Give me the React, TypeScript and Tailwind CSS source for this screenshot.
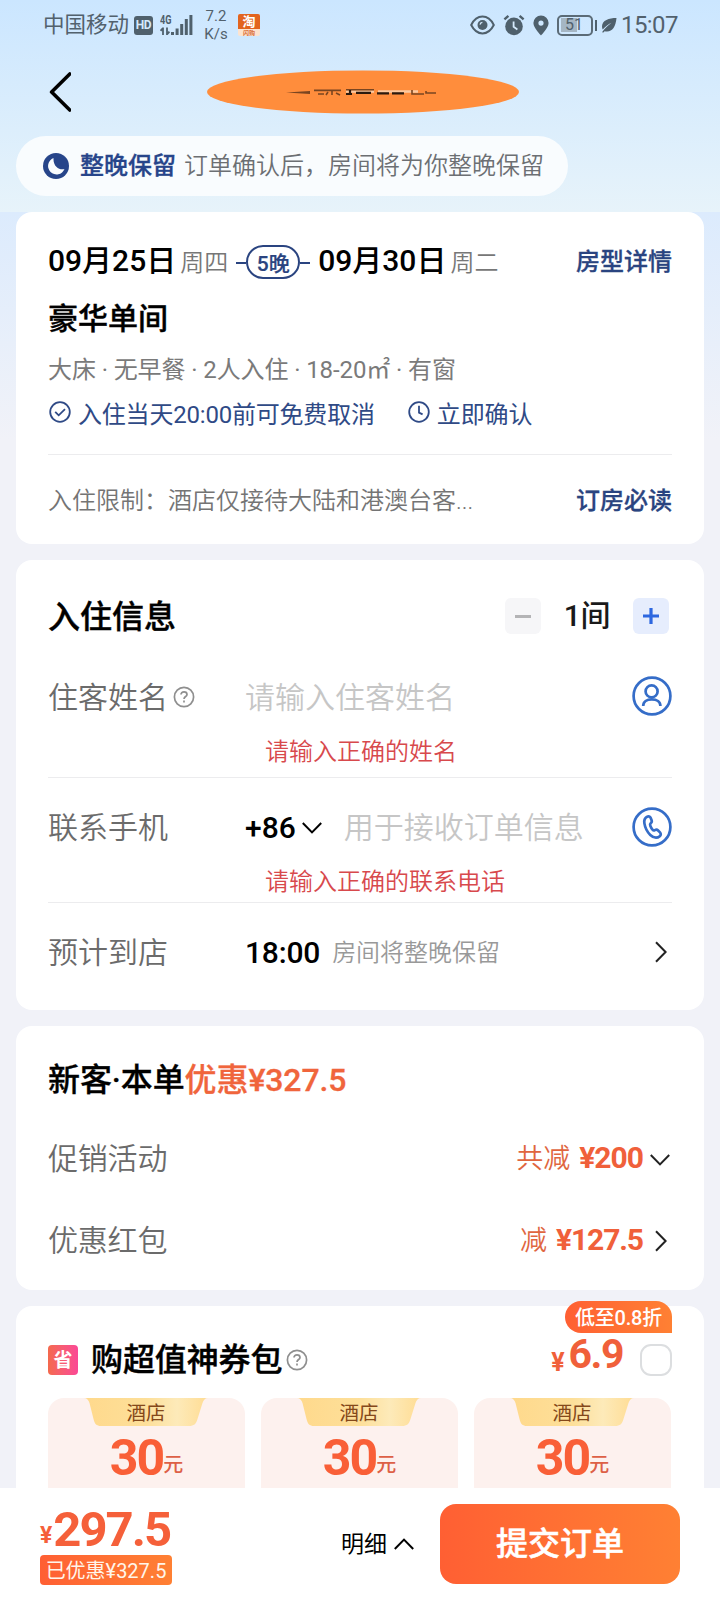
import type { ReactNode } from 'react'

const coupons = [
  { id: 1, type: '酒店', amount: 30 },
  { id: 2, type: '酒店', amount: 30 },
  { id: 3, type: '酒店', amount: 30 },
]

function Chevron({ dir, className = '' }: { dir: 'down' | 'up' | 'right'; className?: string }) {
  if (dir === 'right') {
    return (
      <svg width="12" height="22" viewBox="0 0 12 22" fill="none" className={className}>
        <path d="M1 1.2 10.6 11 1 20.8" stroke="currentColor" strokeWidth="2" />
      </svg>
    )
  }
  return (
    <svg width="20" height="12" viewBox="0 0 20 12" fill="none" className={className}>
      <path d={dir === 'down' ? 'M.8 1 10 10.4 19.2 1' : 'M.8 11 10 1.6 19.2 11'} stroke="currentColor" strokeWidth="2" />
    </svg>
  )
}

function HelpIcon() {
  return (
    <svg width="22" height="22" viewBox="0 0 22 22" fill="none" stroke="#8f8f8f" strokeWidth="1.7">
      <circle cx="11" cy="11" r="9.6" />
      <path d="M8 8.6c0-1.7 1.2-2.7 3-2.7s3 1 3 2.5c0 2.1-3 2.2-3 4.6" />
      <path d="M11 14.6v2" />
    </svg>
  )
}

function StatusBar() {
  return (
    <div className="flex h-12 items-center pl-[43px] pr-[41px] pt-[2px] text-[#52616d]">
      <span className="text-[21.5px] leading-none">中国移动</span>
      <span className="ml-[5px] flex h-[19px] w-[19px] items-center justify-center rounded-[3px] bg-[#4f606c] text-[12px] font-bold tracking-[-0.3px] text-[#d5e9fb]">
        HD
      </span>
      <svg width="34" height="24" viewBox="0 0 34 24" className="ml-[7px]" fill="#4f606c">
        <text x="0" y="11" fontSize="12.5" fontWeight="700" fontFamily="Roboto, sans-serif" textLength="11.5" lengthAdjust="spacingAndGlyphs">4G</text>
        <path d="M3 14.5v7.5M.6 17.8l2.4-2.8M7 14.4v7.5M9.4 18.6l-2.4 2.8" stroke="#4f606c" strokeWidth="1.8" fill="none" />
        <rect x="11" y="19" width="3" height="3" />
        <rect x="15.6" y="15.5" width="3" height="6.5" />
        <rect x="20.2" y="11" width="3" height="11" />
        <rect x="24.8" y="6" width="3" height="16" />
        <rect x="29.4" y="2" width="3" height="20" />
      </svg>
      <div className="ml-[10px] flex w-6 flex-col text-center text-[15px] leading-[18px]">
        <span>7.2</span>
        <span>K/s</span>
      </div>
      <div className="ml-[10px] flex h-[22px] w-[22px] flex-col overflow-hidden rounded-[2px] bg-[#fde3cf]">
        <span className="flex h-[15px] items-center justify-center bg-[#e2641f] text-[13px] font-bold leading-none text-white">淘</span>
        <span className="text-center text-[6px] font-bold leading-[7px] text-[#d9703a]">闪购</span>
      </div>

      <div className="ml-auto flex items-center">
        <svg width="25" height="20" viewBox="0 0 25 20" fill="none" stroke="#4f606c" strokeWidth="2">
          <path d="M1.2 10C4 4.4 7.8 1.6 12.5 1.6S21 4.4 23.8 10C21 15.6 17.2 18.4 12.5 18.4S4 15.6 1.2 10Z" />
          <circle cx="12.5" cy="10" r="5" fill="#4f606c" stroke="none" />
          <path d="M10 9.6a2.6 2.6 0 0 1 2.4-2.3" stroke="#d5e9fb" strokeWidth="1.2" />
        </svg>
        <svg width="22" height="22" viewBox="0 0 22 22" fill="#4f606c" className="ml-2">
          <circle cx="11" cy="12.4" r="8.8" />
          <path d="M1.4 5.4 5.4 1.8M20.6 5.4l-4-3.6" stroke="#4f606c" strokeWidth="2.4" />
          <path d="M10.6 7.4v5.4l3.8 2.6" stroke="#d5e9fb" strokeWidth="1.8" fill="none" />
        </svg>
        <svg width="16" height="21" viewBox="0 0 16 21" className="ml-2">
          <path fillRule="evenodd" d="M8 .5a7.6 7.6 0 0 0-7.6 7.6C.4 13 8 20.5 8 20.5s7.6-7.5 7.6-12.4A7.6 7.6 0 0 0 8 .5Zm0 5a2.6 2.6 0 1 1 0 5.2 2.6 2.6 0 0 1 0-5.2Z" fill="#4f606c" />
        </svg>
        <div className="ml-2 flex h-[21px] w-9 items-center rounded-[5px] border-2 border-[#5b6b77] p-[2px]">
          <div className="flex h-[14px] w-4 items-center whitespace-nowrap bg-[#a5b6c4] pl-[4px] text-[16px] leading-none">
            51
          </div>
        </div>
        <span className="ml-[2px] h-[11px] w-[2px] bg-[#4f606c]" />
        <svg width="16" height="16" viewBox="0 0 16 16" className="ml-[4px]" fill="#4f606c">
          <path d="M15.5 1C8 1 1 3.2 1 9.6c0 1.3.3 2.2.8 3C4.2 9.8 7 7.4 10.6 5.8 7.2 8.200 3.6 11.6 1 15.2l1.4.4 1.2-1.4C10.5 16 14.6 10.6 15.5 1Z" />
        </svg>
        <span className="ml-[4px] w-[58px] text-[24px] leading-none tracking-[-0.6px]">15:07</span>
      </div>
    </div>
  )
}

function NavBar() {
  return (
    <div className="flex h-[88px] items-center pl-[49px]">
      <svg width="22" height="40" viewBox="0 0 22 40" fill="none" stroke="#000" strokeWidth="3.6" strokeLinecap="round" strokeLinejoin="round">
        <path d="M20.8 2 2.6 20l18.2 18" />
      </svg>
      {/* hotel name, scribbled over */}
      <svg width="314" height="44" viewBox="0 0 314 44" className="ml-[135px]">
        <ellipse cx="157" cy="22" rx="156" ry="21.6" fill="#ff8d3c" />
        <path d="M140 21.5h28M172 21.5h40" stroke="#fbc9a0" strokeWidth="2.6" />
        <path d="M80 22.5 104 21v3ZM108 19.5h27v1.8h-27ZM140 19h28v1.6h-28Z" fill="#7a4520" />
        <path d="M112 24h6M122 22l-2 3M126 21v4M130 23l4 2M206 20v4h12M220 21v2h10" stroke="#7a4520" strokeWidth="1.6" fill="none" />
        <path d="M140 24h6M144 20v5M150 22.8h15M171 23.3h12M186 23.3h12" stroke="#2b1a0e" strokeWidth="2.2" />
      </svg>
    </div>
  )
}

function Card({ className = '', children }: { className?: string; children: ReactNode }) {
  return <section className={`relative mx-4 shrink-0 rounded-2xl bg-white px-8 ${className}`}>{children}</section>
}

function RoomCard() {
  return (
    <Card className="h-[332px] pt-6">
      <div className="flex h-12 items-center">
        <span className="text-[30px] font-medium text-black">09月25日</span>
        <span className="ml-[4px] mt-[6px] text-2xl font-[350] text-[#777]">周四</span>
        <span className="ml-2 mt-[5px] h-[2px] w-[10px] bg-[#2a4480]" />
        <span className="mt-[4px] flex h-[34px] w-[54px] items-center justify-center rounded-full border-2 border-[#2a4480] pt-[5px] text-[21px] font-medium text-[#2a4480] [-webkit-text-stroke:0.2px]">
          5晚
        </span>
        <span className="mt-[5px] h-[2px] w-[10px] bg-[#2a4480]" />
        <span className="ml-[8px] text-[30px] font-medium text-black">09月30日</span>
        <span className="ml-[4px] mt-[6px] text-2xl font-[350] text-[#777]">周二</span>
        <a className="ml-auto mt-[3px] text-2xl font-medium text-[#2a4480] [-webkit-text-stroke:0.3px]">房型详情</a>
      </div>
      <h2 className="flex h-[68px] items-center text-[30px] font-medium text-black [-webkit-text-stroke:0.4px]">豪华单间</h2>
      <p className="mt-[2px] flex h-8 items-center text-2xl tracking-[-0.1px] text-[#7a7a7a]">大床 · 无早餐 · 2人入住 · 18-20㎡ · 有窗</p>
      <div className="flex h-14 items-center text-2xl text-[#2f4a86]">
        <svg width="22" height="22" viewBox="0 0 22 22" fill="none" stroke="currentColor" strokeWidth="1.8" className="mb-1 ml-[1px]">
          <circle cx="11" cy="11" r="9.8" />
          <path d="m6.2 10.8 3.5 3.5 6.3-6.2" />
        </svg>
        <span className="ml-[7px] mt-[2px] tracking-[-0.2px]">入住当天20:00前可免费取消</span>
        <svg width="22" height="22" viewBox="0 0 22 22" fill="none" stroke="currentColor" strokeWidth="1.8" className="mb-1 ml-[33px]">
          <circle cx="11" cy="11" r="9.8" />
          <path d="M11 4.800v6.800l3.600 1.800" />
        </svg>
        <span className="ml-[7px] mt-[2px] tracking-[-0.1px]">立即确认</span>
      </div>
      <div className="mt-3 flex h-[90px] items-center justify-between border-t border-[#ececee] pt-[3px] text-2xl">
        <span className="font-[350] text-[#747474]">入住限制：酒店仅接待大陆和港澳台客...</span>
        <a className="font-medium text-[#2a4480] [-webkit-text-stroke:0.3px]">订房必读</a>
      </div>
    </Card>
  )
}

function GuestCard() {
  return (
    <Card className="mt-4 h-[450px] pt-6">
      <div className="flex h-16 items-center pr-[3px]">
        <h2 className="mt-[2px] text-[32px] font-medium text-black [-webkit-text-stroke:0.4px]">入住信息</h2>
        <button className="ml-auto flex h-9 w-9 items-center justify-center rounded-md bg-[#f6f6f8]">
          <span className="h-[3px] w-4 bg-[#b4b4b6]" />
        </button>
        <span className="mb-[2px] w-[92px] text-center text-[30px] font-medium tracking-[-0.3px] text-[#1a1a1a]">1间</span>
        <button className="flex h-9 w-9 items-center justify-center rounded-md bg-[#e6edfd]">
          <svg width="16" height="16" viewBox="0 0 16 16" stroke="#2d67e0" strokeWidth="3.2">
            <path d="M8 0v16M0 8h16" />
          </svg>
        </button>
      </div>

      <div className="h-[129px] pt-3">
        <div className="flex h-[74px] items-center text-[30px] font-[350]">
          <div className="flex w-[197px] items-center gap-[5px] text-[#6b6b6b]">
            住客姓名
            <HelpIcon />
          </div>
          <span className="text-[#c6c6c6]">请输入住客姓名</span>
          <svg width="40" height="40" viewBox="0 0 40 40" fill="none" stroke="#356dc8" strokeWidth="2.7" className="mb-[2px] ml-auto">
            <circle cx="20" cy="20" r="18.4" />
            <circle cx="19.6" cy="15.4" r="6" />
            <path d="M11.2 30c0-4.2 3.6-6.6 8.6-6.6s8.6 2.4 8.6 6.6" />
          </svg>
        </div>
        <p className="flex h-9 items-center pl-[217px] text-2xl font-[350] text-[#d8494c]">请输入正确的姓名</p>
      </div>

      <div className="h-[125px] border-t border-[#ececee] pt-3">
        <div className="flex h-[74px] items-center text-[30px] font-[350]">
          <span className="w-[197px] text-[#6b6b6b]">联系手机</span>
          <span className="font-medium text-black">+86</span>
          <Chevron dir="down" className="ml-[6px] mt-[2px] text-black" />
          <span className="ml-[22px] text-[#c6c6c6]">用于接收订单信息</span>
          <svg width="40" height="40" viewBox="0 0 40 40" fill="none" stroke="#356dc8" strokeWidth="2.7" strokeLinejoin="round" className="ml-auto">
            <circle cx="20" cy="20" r="18.4" />
            <path d="M15 9.8c1.5-.9 3.1-.3 3.7 1.200l.9 2.300c.5 1.300 0 2.300-.9 3-.8.700-.8 1.500-.4 2.500.5 1.300 1.300 2.900 2.200 3.900.7.800 1.500.9 2.400.4 1.200-.6 2.300-.5 3.200.4l1.900 1.900c1.100 1.200 1 2.800-.2 3.800-2.700 2.200-6.400 1.600-9.500-1.300-3.200-3-5.200-7.200-5.900-11.500-.5-3 .3-5.300 2.600-6.600Z" />
          </svg>
        </div>
        <p className="flex h-9 items-center pl-[217px] text-2xl font-[350] text-[#d8494c]">请输入正确的联系电话</p>
      </div>

      <div className="flex h-[100px] items-center border-t border-[#ececee] text-[30px] font-[350]">
        <span className="w-[197px] text-[#6b6b6b]">预计到店</span>
        <span className="font-medium tracking-[-0.2px] text-black">18:00</span>
        <span className="ml-[12px] text-2xl text-[#999]">房间将整晚保留</span>
        <Chevron dir="right" className="mb-[2px] ml-auto mr-[5px] text-[#222]" />
      </div>
    </Card>
  )
}

function DiscountCard() {
  return (
    <Card className="mt-4 h-[264px] pt-[22px]">
      <h2 className="mb-[5px] flex h-16 items-center text-[32px] font-medium tracking-[-0.1px] text-black [-webkit-text-stroke:0.3px]">
        新客·本单<span className="text-[#f0653c]">优惠¥327.5</span>
      </h2>
      <div className="flex h-[82px] items-center">
        <span className="text-[30px] font-[350] tracking-[-0.2px] text-[#6b6b6b]">促销活动</span>
        <span className="ml-auto mt-[2px] text-[27px] font-[350] text-[#e0663f]">共减</span>
        <span className="mb-[2px] ml-[9px] text-[30px] font-bold tracking-[-1px] text-[#f0603a]">¥200</span>
        <Chevron dir="down" className="ml-[7px] mr-[2px] mt-[3px] text-[#222]" />
      </div>
      <div className="flex h-[82px] items-center">
        <span className="text-[30px] font-[350] tracking-[-0.2px] text-[#6b6b6b]">优惠红包</span>
        <span className="ml-auto mt-[2px] text-[27px] font-[350] text-[#e0663f]">减</span>
        <span className="mb-[2px] ml-[9px] text-[30px] font-bold tracking-[-1.1px] text-[#f0603a]">¥127.5</span>
        <Chevron dir="right" className="ml-[12px] mr-[5px] mt-[2px] text-[#222]" />
      </div>
    </Card>
  )
}

function CouponCard() {
  return (
    <Card className="mt-4 h-[300px] pt-[22px]">
      <span className="absolute right-8 top-[-5px] flex h-8 w-[107px] items-center justify-center rounded-[16px] rounded-br-none bg-linear-to-r from-[#ff5f33] to-[#ff8033] pt-[2px] text-[20px] font-medium tracking-[-0.2px] text-white">
        低至0.8折
      </span>
      <div className="flex h-16 items-center">
        <span className="flex h-[30px] w-[30px] items-center justify-center rounded-[4px] bg-linear-to-r from-[#f4694c] to-[#fb4796] text-[19px] font-bold leading-none text-white">
          省
        </span>
        <h2 className="ml-[13px] mr-[4px] text-[32px] font-medium tracking-[-0.1px] text-black [-webkit-text-stroke:0.4px]">购超值神券包</h2>
        <HelpIcon />
        <div className="mb-[11px] ml-auto flex items-end font-bold leading-none text-[#f0603a]">
          <span className="mr-[4px] text-[25px]">¥</span>
          <span className="text-[41px] tracking-[-1.5px]">6.9</span>
        </div>
        <span className="ml-[17px] h-8 w-8 rounded-[11px] border-2 border-[#dcdee0]" />
      </div>
      <div className="mr-[1px] mt-[6px] grid grid-cols-3 gap-4">
        {coupons.map((coupon) => (
          <div key={coupon.id} className="relative flex h-40 flex-col items-center rounded-2xl bg-[#fdf1ee]">
            <svg width="124" height="28" viewBox="0 0 124 28" className="absolute left-[36px] top-0">
              <defs>
                <linearGradient id={`tab-${coupon.id}`}>
                  <stop offset="0" stopColor="#ffd98c" />
                  <stop offset="0.5" stopColor="#fddf99" />
                  <stop offset="0.75" stopColor="#fdeab9" />
                  <stop offset="1" stopColor="#ffdc93" />
                </linearGradient>
              </defs>
              <path d="M0 0c3 0 4.5 2 5.5 5l4 16c1.3 5 3 7 7.5 7h88c5 0 7-2 8.5-7l5-16c1-3 2.5-5 5.5-5Z" fill={`url(#tab-${coupon.id})`} />
            </svg>
            <span className="relative mr-[1px] flex h-[31px] items-center text-[19.5px] text-[#84481a]">{coupon.type}</span>
            <div className="mt-[4px] flex items-baseline leading-none text-[#f95f37]">
              <span className="text-[50px] font-bold tracking-[-2px]">{coupon.amount}</span>
              <span className="relative top-[-3px] text-[20px] font-medium text-[#dd6046]">元</span>
            </div>
          </div>
        ))}
      </div>
    </Card>
  )
}

function SubmitBar() {
  return (
    <footer className="flex h-28 shrink-0 items-center bg-white pl-10 pr-10">
      <div className="flex flex-col items-start">
        <div className="flex h-[49px] items-baseline font-bold leading-none text-[#f5603a]">
          <span className="relative top-[-2px] mr-[1px] text-[23px]">¥</span>
          <span className="relative top-[1px] text-[49px] tracking-[-2px]">297.5</span>
        </div>
        <span className="mt-[2px] flex h-[30px] w-[132px] items-center justify-center rounded-[4px] bg-linear-to-r from-[#ff5f33] to-[#ff8033] pt-[2px] text-[20px] text-[#fff5ea]">
          已优惠¥327.5
        </span>
      </div>
      <span className="ml-auto mt-[3px] text-[23px] text-black">明细</span>
      <Chevron dir="up" className="ml-[7px] mr-[26px] text-black" />
      <button className="flex h-20 w-60 items-center justify-center rounded-2xl bg-linear-to-r from-[#ff5f33] to-[#ff8033] text-[32px] font-medium text-white [-webkit-text-stroke:0.5px]">
        提交订单
      </button>
    </footer>
  )
}

export default function App() {
  return (
    <div className="flex h-[1600px] w-[720px] flex-col overflow-hidden bg-[#f1f2f8] font-['Roboto','Noto_Sans_CJK_SC',sans-serif]">
      <main className="flex min-h-0 flex-1 flex-col overflow-hidden bg-[linear-gradient(180deg,#dcebfd_212px,#f1f2f8_440px)]">
        <header className="h-[212px] shrink-0 bg-linear-to-b from-[#cbe6ff] to-[#e7f3fa]">
          <StatusBar />
          <NavBar />
          <div className="mx-4 flex h-[60px] w-[552px] items-center rounded-full bg-[#f9fcfe] pl-[27px] text-2xl">
            <svg width="26" height="26" viewBox="0 0 26 26">
              <circle cx="13" cy="13" r="13" fill="#27458a" />
              <path d="M10.5 5A8.5 8.5 0 1 0 21.5 16C17 17.5 10 14 10.5 5Z" fill="#f9fcfe" />
            </svg>
            <span className="ml-[11px] font-medium text-[#27458a] [-webkit-text-stroke:0.3px]">整晚保留</span>
            <span className="ml-[8px] font-[350] text-[#6c6f73]">订单确认后，房间将为你整晚保留</span>
          </div>
        </header>
        <RoomCard />
        <GuestCard />
        <DiscountCard />
        <CouponCard />
      </main>
      <SubmitBar />
    </div>
  )
}
